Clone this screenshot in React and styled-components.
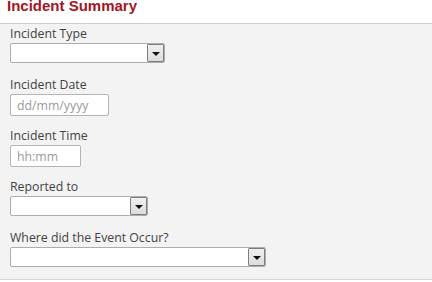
import React from "react";
import styled, { createGlobalStyle } from "styled-components";

const GlobalStyle = createGlobalStyle`
    html, body {
        margin: 0;
        padding: 0;
        background: #ffffff;
    }
`;

const Panel = styled.div`
    width: 432px;
    height: 282px;
    overflow: hidden;
    font-family: "Open Sans", "Liberation Sans", sans-serif;
    background-color: #ffffff;
`;

const Header = styled.div`
    height: 23px;
    background-color: #ffffff;
    border-bottom: 1px solid #cdcdcd;
    padding-left: 7px;
`;

const Title = styled.h2`
    margin: 0;
    font-family: "Liberation Sans", Arial, sans-serif;
    font-size: 15px;
    line-height: 11px;
    font-weight: bold;
    color: #a3151f;
`;

const Body = styled.div`
    height: 256px;
    box-sizing: border-box;
    padding: 2px 10px 0;
    background-color: #f3f3f3;
    border-bottom: 1px solid #d6d6d6;
`;

const Group = styled.div`
    height: 51px;
    display: flex;
    flex-direction: column;
    align-items: flex-start;
`;

const Label = styled.label`
    font-size: 12.3px;
    line-height: 16px;
    color: #424242;
    margin-bottom: 1px;
`;

const TextInput = styled.input`
    box-sizing: border-box;
    width: ${props => props.width}px;
    height: 22px;
    margin: 0;
    padding: 0 6px;
    border: 1px solid #b4b4b4;
    border-radius: 2px;
    background: #ffffff;
    font-family: "Open Sans", "Liberation Sans", sans-serif;
    font-size: 12.3px;
    color: #333;
    outline: none;

    &::placeholder {
        color: #9a9a9a;
    }
`;

const SelectBox = styled.div`
    box-sizing: border-box;
    width: ${props => props.width}px;
    height: 20px;
    display: flex;
    justify-content: flex-end;
    align-items: stretch;
    padding: 1px;
    border: 1px solid #adadad;
    border-radius: 2px;
    background: #ffffff;
`;

const DropButton = styled.div`
    box-sizing: border-box;
    width: 17px;
    margin: -1px -1px -1px 0;
    display: flex;
    align-items: center;
    justify-content: center;
    border: 1px solid #7e7e7e;
    border-radius: 1px;
    background: linear-gradient(#f0f0f0, #dcdcdc);
`;

const Arrow = styled.span`
    width: 0;
    height: 0;
    border-left: 4px solid transparent;
    border-right: 4px solid transparent;
    border-top: 4px solid #111;
    margin-top: 1px;
`;

const Select = ({ width }) => (
    <SelectBox width={width}>
        <DropButton>
            <Arrow />
        </DropButton>
    </SelectBox>
);

const App = () => {
    return (
        <>
            <GlobalStyle />
            <Panel>
                <Header>
                    <Title>Incident Summary</Title>
                </Header>
                <Body>
                    <Group>
                        <Label>Incident Type</Label>
                        <Select width={155} />
                    </Group>
                    <Group>
                        <Label>Incident Date</Label>
                        <TextInput width={99} placeholder="dd/mm/yyyy" />
                    </Group>
                    <Group>
                        <Label>Incident Time</Label>
                        <TextInput width={71} placeholder="hh:mm" />
                    </Group>
                    <Group>
                        <Label>Reported to</Label>
                        <Select width={138} />
                    </Group>
                    <Group>
                        <Label>Where did the Event Occur?</Label>
                        <Select width={256} />
                    </Group>
                </Body>
            </Panel>
        </>
    );
};

export default App;
